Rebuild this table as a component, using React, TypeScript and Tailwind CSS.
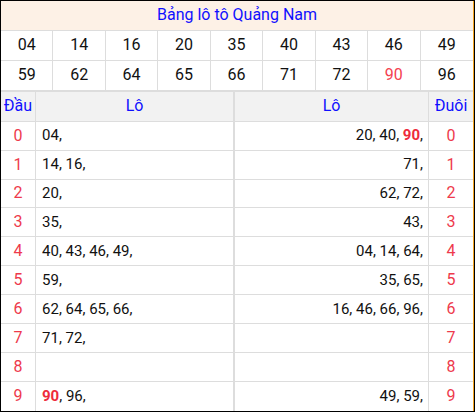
const TOP_NUMBERS = [
  ["04", "14", "16", "20", "35", "40", "43", "46", "49"],
  ["59", "62", "64", "65", "66", "71", "72", "90", "96"],
]

const HOT = "90"

const ROWS: { dau: string[]; duoi: string[] }[] = [
  { dau: ["04"], duoi: ["20", "40", "90"] },
  { dau: ["14", "16"], duoi: ["71"] },
  { dau: ["20"], duoi: ["62", "72"] },
  { dau: ["35"], duoi: ["43"] },
  { dau: ["40", "43", "46", "49"], duoi: ["04", "14", "64"] },
  { dau: ["59"], duoi: ["35", "65"] },
  { dau: ["62", "64", "65", "66"], duoi: ["16", "46", "66", "96"] },
  { dau: ["71", "72"], duoi: [] },
  { dau: [], duoi: [] },
  { dau: ["90", "96"], duoi: ["49", "59"] },
]

function LotoList({ items }: { items: string[] }) {
  return (
    <span className="text-[15px]">
      {items.map((n, i) => (
        <span key={i}>
          {i > 0 ? " " : ""}
          {n === HOT ? <b className="font-bold text-[#ee2b3b]">{n}</b> : n},
        </span>
      ))}
    </span>
  )
}

export default function App() {
  return (
    <div className="w-[475px] h-[412px] bg-white border border-black font-['Roboto',sans-serif] text-[16px] text-[#111]">
      <div className="h-full border-r border-[#f5a623] flex flex-col">
        {/* Title */}
        <div className="h-[30px] bg-[#fdf1e6] border-b border-[#dddddd] flex items-center justify-center text-[#1010ff]">
          Bảng lô tô Quảng Nam
        </div>

        {/* Result numbers */}
        {TOP_NUMBERS.map((row, r) => (
          <div
            key={r}
            className={`grid grid-cols-9 ${r === 1 ? "border-b-2 h-[31px]" : "border-b h-[30px]"} border-[#dddddd]`}
          >
            {row.map((n, i) => (
              <div
                key={i}
                className={`flex items-center justify-center ${i < 8 ? "border-r border-[#dddddd]" : ""} ${
                  n === HOT && r === 1 ? "text-[#f4414f]" : ""
                }`}
              >
                {n}
              </div>
            ))}
          </div>
        ))}

        {/* Header */}
        <div className="flex h-[30px] bg-[#f2f2f2] border-b border-[#dddddd] text-[#1010ff]">
          <div className="w-[35px] border-r border-[#dddddd] flex items-center justify-center">Đầu</div>
          <div className="w-[199px] border-r-2 border-[#dddddd] flex items-center justify-center">Lô</div>
          <div className="flex-1 border-r border-[#dddddd] flex items-center justify-center">Lô</div>
          <div className="w-[44px] flex items-center justify-center">Đuôi</div>
        </div>

        {/* Rows */}
        {ROWS.map((row, i) => (
          <div key={i} className={`flex h-[29px] ${i < 9 ? "border-b" : ""} border-[#dddddd]`}>
            <div className="w-[35px] border-r border-[#dddddd] flex items-center justify-center text-[#ee3a4c]">
              {i}
            </div>
            <div className="w-[199px] border-r-2 border-[#dddddd] flex items-center pl-[6px]">
              <LotoList items={row.dau} />
            </div>
            <div className="flex-1 border-r border-[#dddddd] flex items-center justify-end pr-[5px]">
              <LotoList items={row.duoi} />
            </div>
            <div className="w-[44px] flex items-center justify-center text-[#ee3a4c]">{i}</div>
          </div>
        ))}
      </div>
    </div>
  )
}
